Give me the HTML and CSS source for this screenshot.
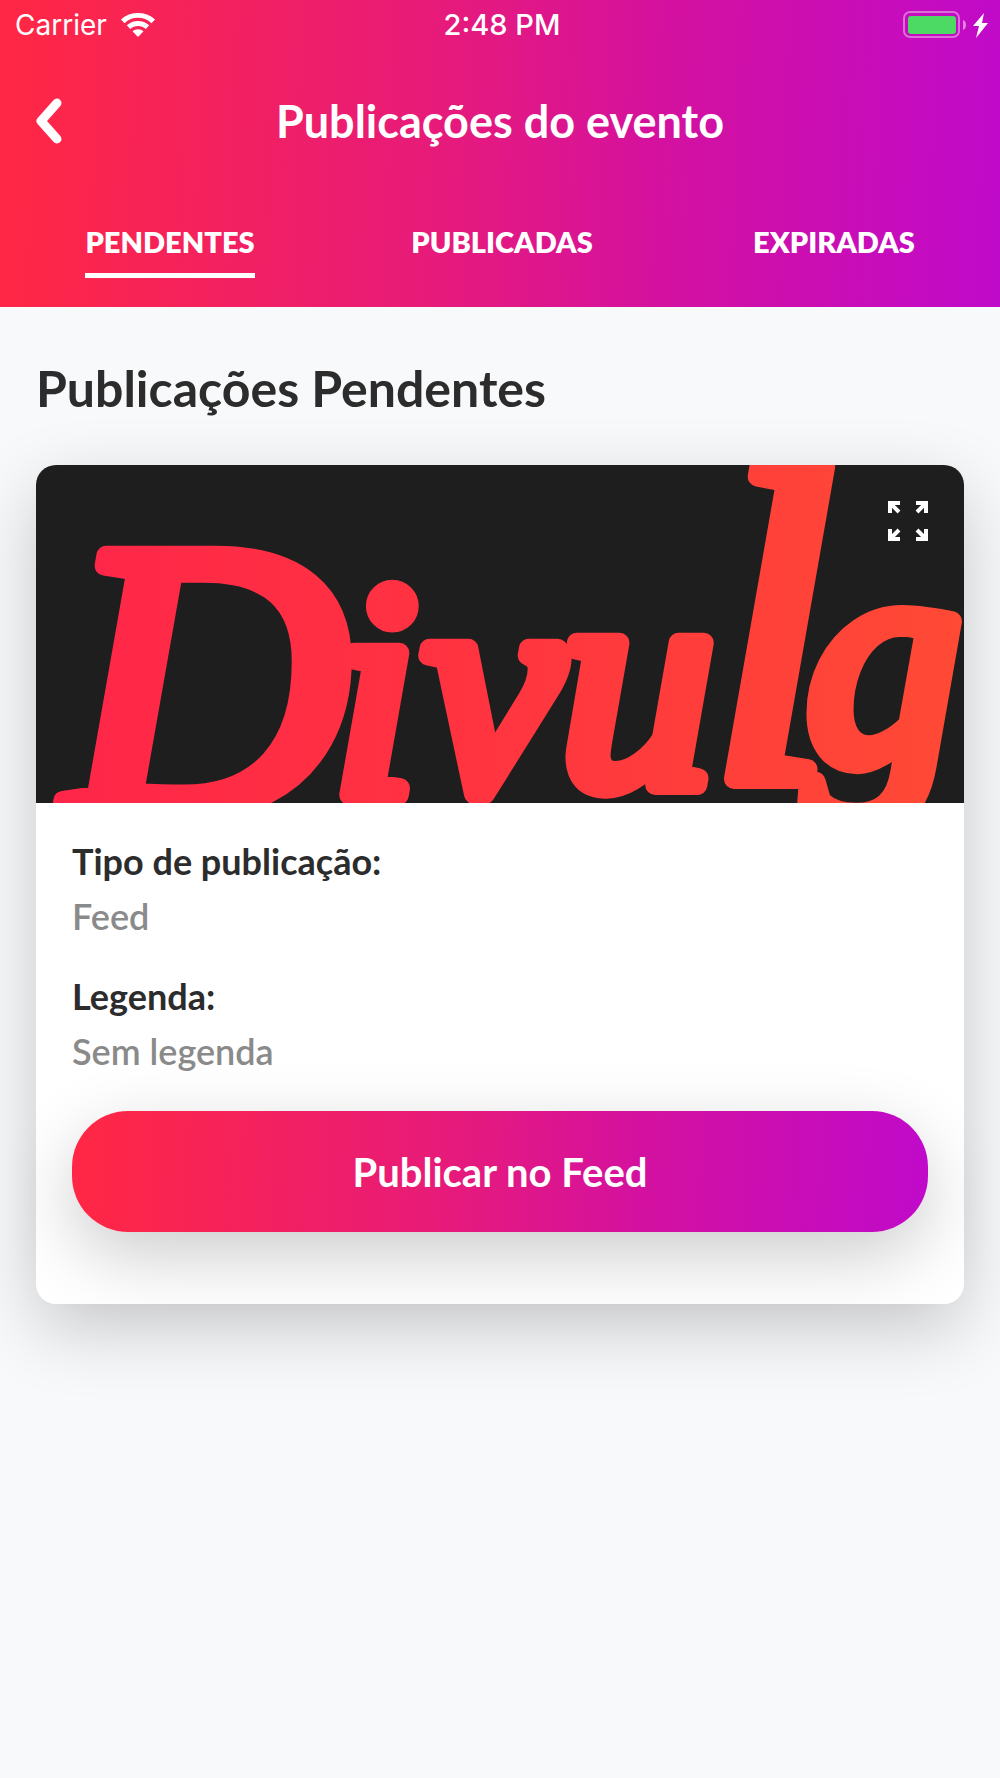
FILE: index.html
```html
<!DOCTYPE html>
<html lang="pt-BR">
<head>
<meta charset="utf-8">
<meta name="viewport" content="width=device-width, initial-scale=1">
<title>Publicações do evento</title>
<link rel="stylesheet" href="styles.css">
</head>
<body>
<header class="header">
  <div class="status">
    <div class="status-left">
      <span class="carrier">Carrier</span>
      <svg class="wifi" viewBox="0 0 34 24" aria-hidden="true">
        <path d="M0 6.500C9-2.200 25-2.200 34 6.500L30.500 10.200C23 3 11 3 3.500 10.200Z"/>
        <path d="M5.800 12.300C12 6.500 22 6.500 28.200 12.300L24.800 16C20.500 12 13.500 12 9.200 16Z"/>
        <path d="M11.500 18.200C14.500 15.500 19.500 15.500 22.500 18.200L17 24Z"/>
      </svg>
    </div>
    <span class="time">2:48 PM</span>
    <div class="status-right">
      <svg class="battery" viewBox="0 0 86 28" aria-hidden="true">
        <rect x="1" y="1" width="55" height="25" rx="6" fill="none" stroke="#fff" stroke-opacity=".4" stroke-width="2"/>
        <rect x="5" y="5" width="48" height="18" rx="3" fill="#4cd964"/>
        <path d="M60 9Q63 10 63 14Q63 18 60 19Z" fill="#fff" fill-opacity=".5"/>
        <path d="M81 2L70 15H76L73 27L85 12H79Z" fill="#fff"/>
      </svg>
    </div>
  </div>
  <div class="titlebar">
    <button class="back" type="button" aria-label="Voltar">
      <svg viewBox="0 0 26 46" aria-hidden="true"><path d="M21 5L5 23L21 41"/></svg>
    </button>
    <h1 class="title">Publicações do evento</h1>
  </div>
  <nav class="tabs">
    <a class="tab active" href="#pendentes" aria-current="page">PENDENTES</a>
    <a class="tab" href="#publicadas">PUBLICADAS</a>
    <a class="tab" href="#expiradas">EXPIRADAS</a>
  </nav>
</header>
<main class="content" id="pendentes">
  <h2 class="heading">Publicações Pendentes</h2>
  <article class="card">
    <div class="cover">
      <svg class="artwork" viewBox="0 0 928 338" preserveAspectRatio="xMidYMid slice" role="img" aria-label="Divulg">
        <defs>
          <linearGradient id="ink" gradientUnits="userSpaceOnUse" x1="20" y1="0" x2="928" y2="0">
            <stop offset="0" stop-color="#ff2649"/>
            <stop offset=".5" stop-color="#ff353f"/>
            <stop offset="1" stop-color="#ff4a35"/>
          </linearGradient>
        </defs>
        <text class="lettering" x="30 296 388 524 674 770" y="346 330 326 320 314 296"><tspan class="initial">D</tspan>ivu<tspan class="tall">l</tspan>g</text>
      </svg>
      <button class="expand" type="button" aria-label="Expandir">
        <svg viewBox="0 0 40 40" aria-hidden="true">
          <path d="M2 12V2H12M2 2L11 11M28 2H38V12M38 2L29 11M2 28V38H12M2 38L11 29M28 38H38V28M38 38L29 29"/>
        </svg>
      </button>
    </div>
    <div class="body">
      <dl class="details">
        <div class="detail"><dt>Tipo de publicação:</dt><dd>Feed</dd></div>
        <div class="detail"><dt>Legenda:</dt><dd>Sem legenda</dd></div>
      </dl>
      <button class="publish" type="button">Publicar no Feed</button>
    </div>
  </article>
</main>
</body>
</html>
```
FILE: styles.css
```css
* { box-sizing: border-box; }

body {
  margin: 0;
  min-height: 100vh;
  background: #f8f9fb;
  color: #2c2c2c;
  font-family: Lato, "Open Sans", sans-serif;
}

h1, h2, dl, dd { margin: 0; }

button {
  border: 0;
  padding: 0;
  background: none;
  color: inherit;
  font: inherit;
  cursor: pointer;
}

svg { display: block; }

.header {
  background: linear-gradient(92deg, #ff2745 2%, #e61a7c 45%, #d4119f 66%, #c00aca);
  color: #fff;
}

.status {
  display: grid;
  grid-template-columns: 1fr auto 1fr;
  align-items: center;
  height: 50px;
  padding: 0 11px 0 15px;
  font: 400 28px/32px Inter, sans-serif;
}

.status-left { display: flex; align-items: center; gap: 14px; }
.status-right { display: flex; justify-content: flex-end; }
.time { font-size: 29px; font-weight: 500; }
.wifi { width: 34px; height: 24px; fill: #fff; }
.battery { width: 86px; height: 28px; }

.titlebar {
  display: grid;
  grid-template-columns: 64px 1fr 64px;
  align-items: center;
  height: 142px;
  padding: 0 36px;
}

.back { width: 26px; height: 46px; }
.back path {
  fill: none;
  stroke: #fff;
  stroke-width: 9;
  stroke-linecap: round;
  stroke-linejoin: round;
}

.title {
  font-size: 45px;
  line-height: 52px;
  text-align: center;
}

.tabs {
  display: grid;
  grid-template-columns: repeat(3, 1fr);
  justify-items: center;
  padding: 32px 0 29px 4px;
}

.tab {
  height: 54px;
  color: #fff;
  font-size: 29px;
  font-weight: 800;
  line-height: 36px;
  text-decoration: none;
}

.active { border-bottom: 5px solid #fff; }

.content { padding: 52px 36px; }

.heading {
  margin-bottom: 48px;
  font-size: 50px;
  line-height: 58px;
}

.card {
  border-radius: 20px;
  background: #fff;
  box-shadow: 0 24px 72px rgba(0, 0, 0, .2);
}

.cover {
  position: relative;
  height: 338px;
  overflow: hidden;
  border-radius: 20px 20px 0 0;
  background: #1e1e1e;
}

.artwork { width: 100%; height: 100%; }

.lettering {
  fill: url(#ink);
  stroke: url(#ink);
  stroke-width: 20;
  stroke-linecap: round;
  stroke-linejoin: round;
  font: italic 400 310px "Liberation Serif", serif;
}
.initial { font-size: 390px; }
.tall { font-size: 450px; }

.expand {
  position: absolute;
  top: 36px;
  right: 36px;
  width: 40px;
  height: 40px;
}
.expand path { fill: none; stroke: #fff; stroke-width: 4; }

.body { padding: 38px 36px 72px; }

.details { display: grid; gap: 40px; margin-bottom: 40px; }

.detail {
  display: grid;
  gap: 15px;
  font-size: 36px;
  line-height: 40px;
}
.detail dt { font-weight: 700; }
.detail dd { color: #8a8a8a; font-weight: 600; }

.publish {
  display: block;
  width: 100%;
  height: 121px;
  border-radius: 56px;
  background: linear-gradient(92deg, #ff2745 2%, #e61a7c 45%, #d4119f 66%, #c00aca);
  box-shadow: 0 24px 72px rgba(0, 0, 0, .2);
  color: #fff;
  font-size: 40px;
  font-weight: 700;
}
```
